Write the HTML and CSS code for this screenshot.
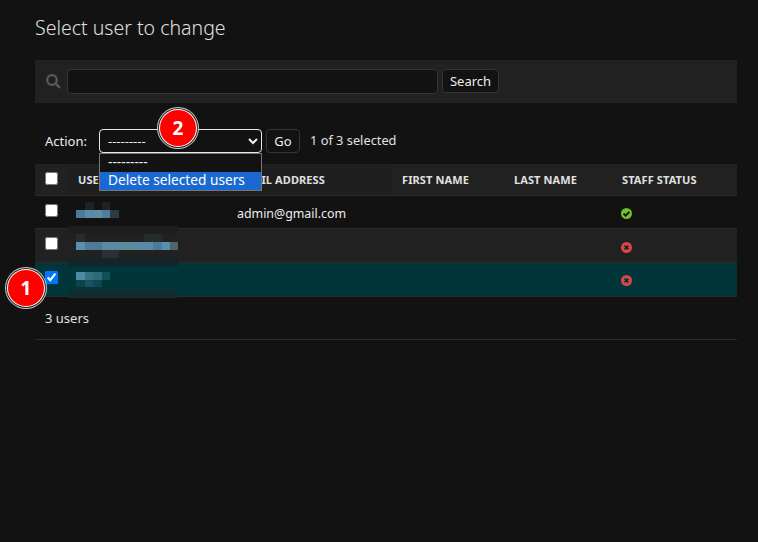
FILE: index.html
```html
<!DOCTYPE html>
<html lang="en">
<head>
    <meta charset="UTF-8">
    <meta name="viewport" content="width=device-width, initial-scale=1.0">
    <title>Select user to change</title>
    <link rel="stylesheet" href="styles.css">
</head>
<body>
    <div id="content">
        <h1>Select user to change</h1>

        <div id="toolbar">
            <svg class="search-icon" width="15" height="15" viewBox="0 0 15 15">
                <circle cx="6" cy="6" r="4.8" fill="none" stroke="#5a5a5a" stroke-width="2.2"/>
                <line x1="9.4" y1="9.4" x2="14" y2="14" stroke="#5a5a5a" stroke-width="2.4"/>
            </svg>
            <input type="text" id="searchbar">
            <button class="btn search-btn">Search</button>
        </div>

        <div id="actions">
            <label>Action:</label>
            <div class="action-select">
                <select>
                    <option>---------</option>
                    <option>Delete selected users</option>
                </select>
                <div class="select-list">
                    <div class="select-option">---------</div>
                    <div class="select-option active">Delete selected users</div>
                </div>
                <span class="badge badge-two">2</span>
            </div>
            <button class="btn go-btn">Go</button>
            <span class="action-counter">1 of 3 selected</span>
        </div>

        <div id="results">
            <table>
                <colgroup>
                    <col class="col-check">
                    <col class="col-user">
                    <col class="col-email">
                    <col class="col-first">
                    <col class="col-last">
                    <col>
                </colgroup>
                <thead>
                    <tr>
                        <th class="check-head"><input type="checkbox"></th>
                        <th>USERNAME</th>
                        <th>EMAIL ADDRESS</th>
                        <th>FIRST NAME</th>
                        <th>LAST NAME</th>
                        <th>STAFF STATUS</th>
                    </tr>
                </thead>
                <tbody>
                    <tr class="row1">
                        <td><input type="checkbox"></td>
                        <td></td>
                        <td class="email">admin@gmail.com</td>
                        <td></td>
                        <td></td>
                        <td>
                            <svg class="status" width="11" height="11" viewBox="0 0 11 11">
                                <circle cx="5.5" cy="5.5" r="5.5" fill="#70bf2b"/>
                                <path d="M2.6 5.6 4.6 7.6 8.4 3.8" fill="none" stroke="#121212" stroke-width="1.9"/>
                            </svg>
                        </td>
                    </tr>
                    <tr class="row2">
                        <td><input type="checkbox"></td>
                        <td></td>
                        <td></td>
                        <td></td>
                        <td></td>
                        <td>
                            <svg class="status" width="11" height="11" viewBox="0 0 11 11">
                                <circle cx="5.5" cy="5.5" r="5.5" fill="#dd4646"/>
                                <path d="M3.6 3.6 7.4 7.4M7.4 3.6 3.6 7.4" fill="none" stroke="#212121" stroke-width="1.8"/>
                            </svg>
                        </td>
                    </tr>
                    <tr class="selected">
                        <td><input type="checkbox" checked></td>
                        <td></td>
                        <td></td>
                        <td></td>
                        <td></td>
                        <td>
                            <svg class="status" width="11" height="11" viewBox="0 0 11 11">
                                <circle cx="5.5" cy="5.5" r="5.5" fill="#dd4646"/>
                                <path d="M3.6 3.6 7.4 7.4M7.4 3.6 3.6 7.4" fill="none" stroke="#00363a" stroke-width="1.8"/>
                            </svg>
                        </td>
                    </tr>
                </tbody>
            </table>

            <!-- blurred usernames -->
            <div class="patch patch-a"></div>
            <div class="patch patch-b"></div>
            <div class="patch patch-c"></div>
            <div class="blur blur-a1"></div>
            <div class="blur blur-a2"></div>
            <div class="blur blur-b1"></div>
            <div class="blur blur-b2"></div>
            <div class="blur blur-b3"></div>
            <div class="blur blur-c1"></div>
            <div class="blur blur-c2"></div>

            <span class="badge badge-one">1</span>
        </div>

        <p class="paginator">3 users</p>
    </div>
</body>
</html>
```

FILE: styles.css
```css
* {
    box-sizing: border-box;
}
html, body {
    height: 100%;
}
body {
    margin: 0;
    background: #121212;
    color: #eeeeee;
    font-family: "Noto Sans", Arial, sans-serif;
    font-size: 13px;
    overflow: hidden;
}
#content {
    padding: 0 21px 0 35px;
}
h1 {
    margin: 0;
    padding-top: 14px;
    height: 60px;
    font-size: 19.5px;
    line-height: 28px;
    font-weight: 300;
    color: #e0e0e0;
}

#toolbar {
    display: flex;
    align-items: center;
    height: 43px;
    padding: 0 11px;
    background: #212121;
}
.search-icon {
    flex: none;
    margin-right: 6px;
}
#searchbar {
    width: 371px;
    height: 25px;
    margin-right: 4px;
    background: #121212;
    border: 1px solid #353535;
    border-radius: 4px;
}
.btn {
    height: 24px;
    padding: 0;
    background: #121212;
    border: 1px solid #353535;
    border-radius: 4px;
    color: #eeeeee;
    font-family: inherit;
    font-size: 13px;
}
.search-btn {
    width: 57px;
    margin-bottom: 1px;
}
.go-btn {
    width: 34px;
    margin-left: 4px;
}

#actions {
    display: flex;
    align-items: center;
    height: 24px;
    margin-top: 26px;
    padding-left: 10px;
}
#actions label {
    width: 54px;
}
.action-select {
    position: relative;
    width: 163px;
    height: 24px;
}
.action-select select {
    width: 100%;
    height: 24px;
    padding: 0 4px;
    background: #121212;
    border: 1px solid #e8e8e8;
    border-radius: 4px;
    color: #eeeeee;
    font-family: inherit;
    font-size: 13px;
}
.select-list {
    position: absolute;
    top: 24px;
    left: 0;
    width: 163px;
    height: 38px;
    background: #121212;
    border: 1px solid #767676;
    z-index: 3;
}
.select-option {
    height: 18px;
    padding-left: 8px;
    font-size: 13.7px;
    line-height: 16px;
    white-space: nowrap;
}
.select-option.active {
    background: #1a69d2;
    color: #ffffff;
}
.action-counter {
    margin-left: 10px;
    margin-top: -2px;
    font-size: 12.8px;
    color: #e0e0e0;
}

.badge {
    position: absolute;
    width: 36px;
    height: 36px;
    border-radius: 50%;
    background: #ff0000;
    box-shadow: 0 0 0 1px #ffffff, 0 0 0 2px #222222, 0 0 0 3px #c8c8c8;
    color: #ffffff;
    font-weight: 700;
    font-size: 19px;
    line-height: 36px;
    text-align: center;
    z-index: 4;
}
.badge-two {
    top: -19px;
    left: 61px;
}
.badge-one {
    top: 106px;
    left: -27px;
}

#results {
    position: relative;
    margin-top: 11px;
}
table {
    width: 100%;
    table-layout: fixed;
    border-collapse: collapse;
}
.col-check { width: 33px; }
.col-user { width: 159px; }
.col-email { width: 165px; }
.col-first { width: 112px; }
.col-last { width: 108px; }
th {
    height: 31px;
    padding: 0 10px;
    background: #1f1f1f;
    border-bottom: 1px solid #2b2b2b;
    font-size: 11px;
    font-weight: 700;
    letter-spacing: 0.1px;
    text-align: left;
    color: #e0e0e0;
    white-space: nowrap;
    overflow: hidden;
}
.check-head {
    background: #212121;
}
th:nth-child(n+4) {
    background: #212121;
}
td {
    height: 33px;
    padding: 8px 10px 0;
    vertical-align: top;
    border-bottom: 1px solid #2b2b2b;
}
td.email {
    font-size: 12.4px;
    padding-top: 9px;
}
tr.row2 td, tr.selected td {
    height: 34px;
}
tr.row2 td {
    background: #212121;
}
tr.selected td {
    background: #00363a;
}
input[type="checkbox"] {
    display: block;
    width: 13px;
    height: 13px;
    margin: 0;
}
.check-head input[type="checkbox"] {
    margin-top: -1px;
}
.status {
    display: block;
    margin: 4px 0 0 -1px;
}
tr.row2 .status {
    margin-top: 5px;
}

.patch {
    position: absolute;
    left: 33px;
    width: 110px;
    height: 8px;
}
.patch-a { top: 62px; background: #1e1e1e; }
.patch-b { top: 94px; background: #132528; }
.patch-c { top: 126px; background: #132a2e; }
.blur {
    position: absolute;
    height: 8px;
}
.blur-a1 {
    top: 38px;
    left: 50px;
    width: 25px;
    background: linear-gradient(90deg, #1b2328 0 9px, transparent 9px 17px, #1b2328 17px);
}
.blur-a2 {
    top: 46px;
    left: 41px;
    width: 43px;
    background: linear-gradient(90deg, #4c7a98 0 9px, #5a8aa6 9px 18px, #5f8ba3 18px 26px, #4f7c9c 26px 34px, #2c3c44 34px);
}
.blur-b1 {
    top: 70px;
    left: 41px;
    width: 102px;
    background: linear-gradient(90deg, #252b2f 0 9px, transparent 9px 68px, #262b2e 68px 86px, transparent 86px);
}
.blur-b2 {
    top: 78px;
    left: 41px;
    width: 102px;
    background: linear-gradient(90deg, #5b90ab 0 9px, #4f7a98 9px 26px, #5a8aa2 26px 43px, #5d8a9d 43px 60px, #5a88a6 60px 77px, #4e7a99 77px 86px, #5a8eaa 86px 94px, #4f656f 94px);
}
.blur-b3 {
    top: 86px;
    left: 67px;
    width: 17px;
    background: #2a3034;
}
.blur-c1 {
    top: 108px;
    left: 41px;
    width: 34px;
    background: linear-gradient(90deg, #4b8ca5 0 9px, #367184 9px 17px, #2f6a7b 17px 26px, #135157 26px);
}
.blur-c2 {
    top: 116px;
    left: 41px;
    width: 26px;
    height: 7px;
    background: linear-gradient(90deg, #0d4248 0 9px, #16525f 9px 17px, #0f4753 17px);
}

.paginator {
    margin: 0;
    height: 43px;
    padding: 12px 0 0 10px;
    border-bottom: 1px solid #2b2b2b;
    color: #e0e0e0;
}
```
